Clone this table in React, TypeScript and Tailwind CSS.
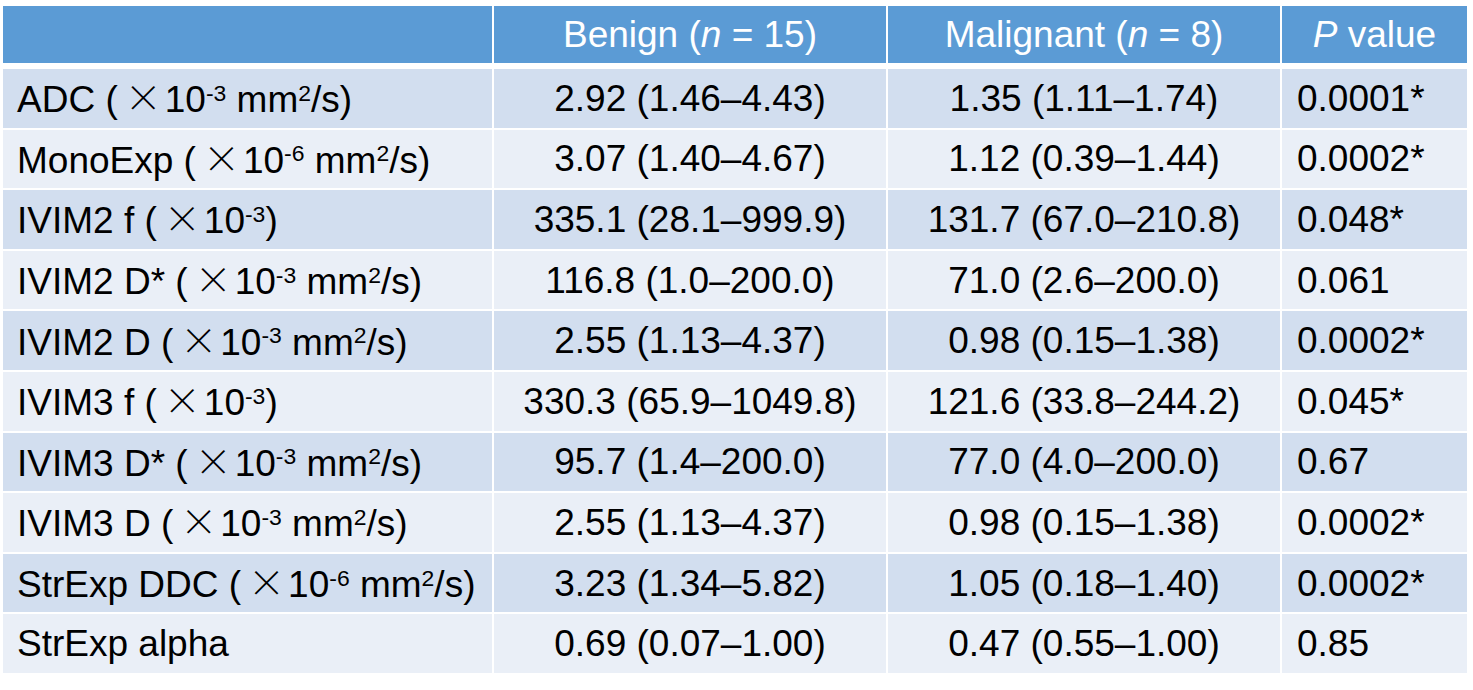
import React from 'react';

type Row = {
  label: React.ReactNode;
  benign: string;
  malignant: string;
  p: string;
};

const Sup = ({ children }: { children: React.ReactNode }) => (
  <sup className="top-[-0.5em] text-[0.62em]">{children}</sup>
);

// thin multiplication sign, as in the source slide
const Times = () => (
  <span className="ml-[7px] mr-[3px] font-['Noto_Sans_CJK_JP',sans-serif] font-light">×</span>
);

const unit = (exp: string) => (
  <>
    {' '}(<Times />10<Sup>{exp}</Sup> mm<Sup>2</Sup>/s)
  </>
);

const frac = (
  <>
    {' '}(<Times />10<Sup>-3</Sup>)
  </>
);

const rows: Row[] = [
  { label: <>ADC{unit('-3')}</>, benign: '2.92 (1.46–4.43)', malignant: '1.35 (1.11–1.74)', p: '0.0001*' },
  { label: <>MonoExp{unit('-6')}</>, benign: '3.07 (1.40–4.67)', malignant: '1.12 (0.39–1.44)', p: '0.0002*' },
  { label: <>IVIM2 f{frac}</>, benign: '335.1 (28.1–999.9)', malignant: '131.7 (67.0–210.8)', p: '0.048*' },
  { label: <>IVIM2 D*{unit('-3')}</>, benign: '116.8 (1.0–200.0)', malignant: '71.0 (2.6–200.0)', p: '0.061' },
  { label: <>IVIM2 D{unit('-3')}</>, benign: '2.55 (1.13–4.37)', malignant: '0.98 (0.15–1.38)', p: '0.0002*' },
  { label: <>IVIM3 f{frac}</>, benign: '330.3 (65.9–1049.8)', malignant: '121.6 (33.8–244.2)', p: '0.045*' },
  { label: <>IVIM3 D*{unit('-3')}</>, benign: '95.7 (1.4–200.0)', malignant: '77.0 (4.0–200.0)', p: '0.67' },
  { label: <>IVIM3 D{unit('-3')}</>, benign: '2.55 (1.13–4.37)', malignant: '0.98 (0.15–1.38)', p: '0.0002*' },
  { label: <>StrExp DDC{unit('-6')}</>, benign: '3.23 (1.34–5.82)', malignant: '1.05 (0.18–1.40)', p: '0.0002*' },
  { label: 'StrExp alpha', benign: '0.69 (0.07–1.00)', malignant: '0.47 (0.55–1.00)', p: '0.85' },
];

const grid = 'grid grid-cols-[489px_392px_392px_185px] gap-x-[2px]';

export default function App() {
  return (
    <div className="min-h-screen bg-white pt-[6px] pl-[3px] font-['Liberation_Sans',Arial,sans-serif] text-[37px] leading-none text-black">
      <div className="w-[1464px]">
        {/* Header */}
        <div className={`${grid} mb-[6px] h-[57px] text-white`}>
          <div className="bg-[#5b9bd5]" />
          <div className="flex items-center justify-center bg-[#5b9bd5]">
            <span>Benign (<i>n</i> = 15)</span>
          </div>
          <div className="flex items-center justify-center bg-[#5b9bd5]">
            <span>Malignant (<i>n</i> = 8)</span>
          </div>
          <div className="flex items-center justify-center bg-[#5b9bd5]">
            <span><i>P</i> value</span>
          </div>
        </div>

        {/* Body */}
        <div className="flex flex-col gap-y-[2px]">
          {rows.map((r, i) => {
            const bg = i % 2 === 0 ? 'bg-[#d2deef]' : 'bg-[#eaeff7]';
            return (
              <div key={i} className={`${grid} h-[58.6px]`}>
                <div className={`${bg} flex items-center pl-[14px] whitespace-nowrap`}>
                  <span>{r.label}</span>
                </div>
                <div className={`${bg} flex items-center justify-center`}>{r.benign}</div>
                <div className={`${bg} flex items-center justify-center`}>{r.malignant}</div>
                <div className={`${bg} flex items-center pl-[15px]`}>{r.p}</div>
              </div>
            );
          })}
        </div>
      </div>
    </div>
  );
}
